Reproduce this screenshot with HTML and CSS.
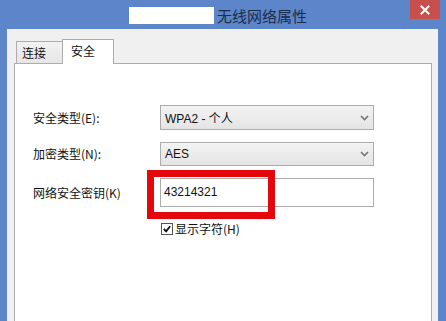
FILE: index.html
```html
<!DOCTYPE html>
<html lang="zh-CN">
<head>
<meta charset="utf-8">
<title>无线网络属性</title>
<link rel="stylesheet" href="styles.css">
</head>
<body>
<div class="window">
  <div class="titlebar">
    <span class="redact"></span>
    <span class="title">无线网络属性</span>
    <div class="close">
      <svg width="10" height="10" viewBox="0 0 10 10"><path d="M1.5 1.5 L8.5 8.5 M8.5 1.5 L1.5 8.5" stroke="#fff" stroke-width="2" stroke-linecap="square"/></svg>
    </div>
  </div>
  <div class="client">
    <div class="tabs">
      <div class="tab">连接</div>
      <div class="tab active">安全</div>
    </div>
    <div class="panel">
      <div class="form">
        <label class="lbl">安全类型(E):</label>
        <div class="combo combo-1"><span>WPA2 - 个人</span>
          <svg class="chev" width="9" height="6" viewBox="0 0 9 6"><path d="M1 1 L4.5 4.5 L8 1" fill="none" stroke="#777" stroke-width="1.6"/></svg>
        </div>
        <label class="lbl">加密类型(N):</label>
        <div class="combo combo-2"><span>AES</span>
          <svg class="chev" width="9" height="6" viewBox="0 0 9 6"><path d="M1 1 L4.5 4.5 L8 1" fill="none" stroke="#777" stroke-width="1.6"/></svg>
        </div>
        <label class="lbl">网络安全密钥(K)</label>
        <div class="textbox">43214321
          <div class="highlight"></div>
        </div>
        <span class="spacer"></span>
        <div class="check">
          <span class="box">
            <svg width="11" height="11" viewBox="0 0 11 11"><path d="M2 5.5 L4.5 8 L9 2.5" fill="none" stroke="#111" stroke-width="2"/></svg>
          </span>
          <span>显示字符(H)</span>
        </div>
      </div>
    </div>
  </div>
</div>
</body>
</html>
```
FILE: styles.css
```css
* { box-sizing: border-box; }
html, body { margin: 0; padding: 0; }
body {
  width: 446px;
  height: 321px;
  overflow: hidden;
  font-family: "Liberation Sans", "Noto Sans CJK SC", sans-serif;
  font-size: 12px;
  color: #111;
}
.window {
  width: 446px;
  height: 321px;
  background: #5c86c9;
  display: flex;
  flex-direction: column;
  position: relative;
}
.titlebar {
  height: 29px;
  flex: none;
  display: flex;
  align-items: center;
  padding-left: 129px;
}
.redact {
  width: 85px;
  height: 17px;
  background: #fffffb;
  margin-top: 2px;
}
.title {
  margin-left: 3px;
  font-family: "Noto Sans CJK SC", sans-serif;
  font-size: 15px;
  line-height: 17px;
  color: #1d2c4c;
  margin-top: 1px;
}
.close {
  position: absolute;
  top: 0;
  right: 6px;
  width: 30px;
  height: 19px;
  background: #c8504c;
  display: flex;
  align-items: center;
  justify-content: center;
}
.client {
  flex: 1;
  margin: 0 8px 0 7px;
  background: #f0f0f0;
  padding: 10px 6px 0 7px;
  display: flex;
  flex-direction: column;
}
.tabs {
  display: flex;
  align-items: flex-end;
  padding-left: 2px;
  height: 24px;
  position: relative;
  z-index: 1;
}
.tab {
  width: 47px;
  height: 22px;
  border: 1px solid #acacac;
  border-bottom: none;
  background: linear-gradient(#f2f2f2, #e6e6e6);
  padding-left: 5px;
  line-height: 21px;
  font-family: "Noto Sans CJK SC", sans-serif;
  font-size: 12px;
}
.tab.active {
  width: 52px;
  height: 25px;
  margin-left: -1px;
  margin-bottom: -1px;
  background: #fff;
  padding-left: 8px;
  line-height: 22px;
}
.panel {
  flex: 1;
  background: #fff;
  border: 1px solid #acacac;
  border-bottom: none;
}
.form {
  display: grid;
  grid-template-columns: 127px 214px;
  grid-template-rows: 25px 24px 29px 13px;
  row-gap: 12px;
  padding: 41px 0 0 18px;
  align-items: center;
}
.form .check { margin-top: 6px; }
.lbl {
  font-family: "Noto Sans CJK SC", sans-serif;
  font-size: 12px;
  line-height: 14px;
  color: #111;
}
.combo {
  height: 100%;
  border: 1px solid #acacac;
  background: linear-gradient(#f3f3f3, #e4e4e4);
  display: flex;
  align-items: center;
  justify-content: space-between;
  padding: 0 4px 0 4px;
  font-family: "Liberation Sans", "Noto Sans CJK SC", sans-serif;
  font-size: 12px;
}
.textbox {
  height: 100%;
  border: 1px solid #acacac;
  background: #fff;
  padding: 6px 0 0 3px;
  line-height: 14px;
  position: relative;
}
.highlight {
  position: absolute;
  left: -14px;
  top: -9px;
  width: 128px;
  height: 49px;
  border: 7px solid #e4070c;
}
.check {
  display: flex;
  align-items: center;
  gap: 2px;
  height: 13px;
  margin-left: 1px;
  font-family: "Noto Sans CJK SC", sans-serif;
  font-size: 12px;
  line-height: 14px;
}
.box {
  width: 12px;
  height: 12px;
  border: 1px solid #555;
  background: #fff;
  display: flex;
  align-items: center;
  justify-content: center;
}
.box svg { width: 10px; height: 10px; }
.spacer { display: block; }
```
